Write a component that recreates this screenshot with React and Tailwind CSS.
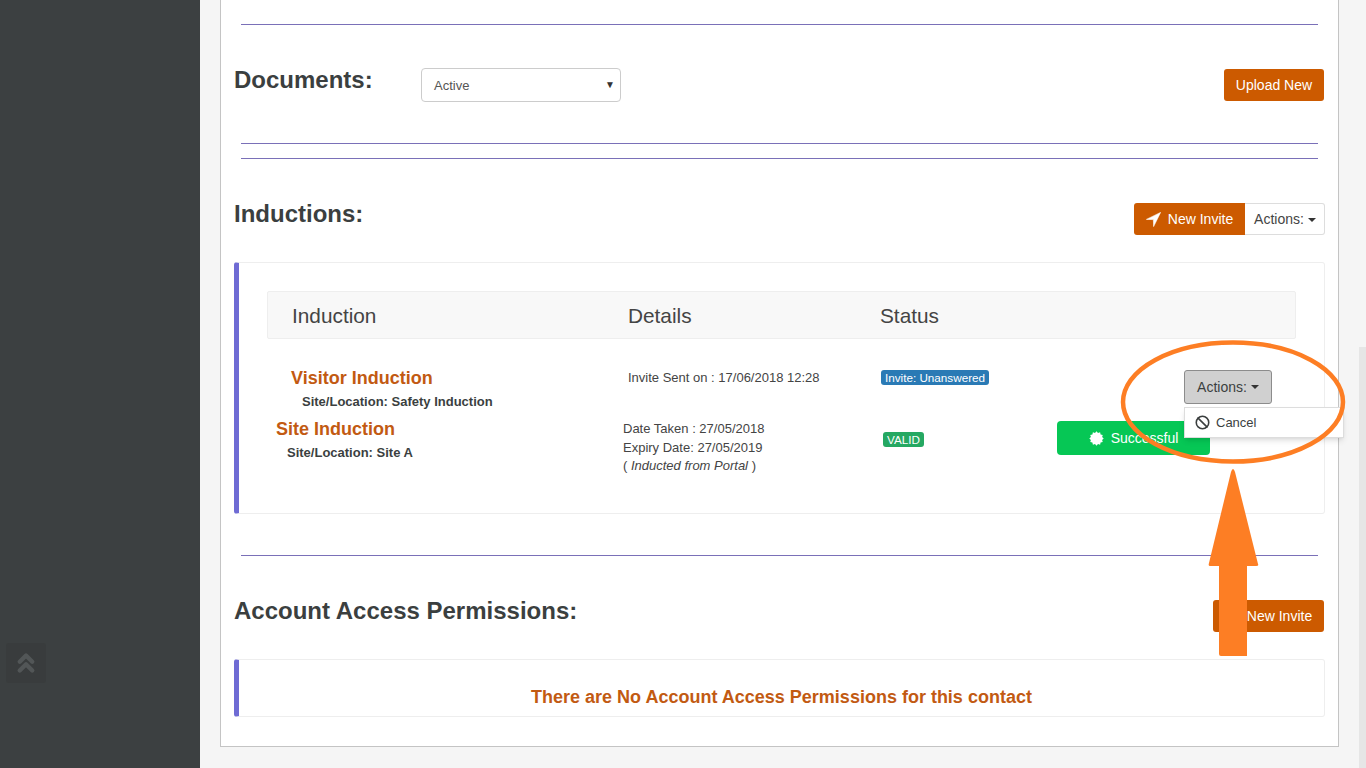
import React from 'react'
import { ChevronsUp, Ban } from 'lucide-react'

function Caret() {
  return <span className="inline-block ml-1 align-middle border-x-[4px] border-x-transparent border-t-[4px] border-t-[#333]" />
}

function Rule({ className = '' }) {
  return <div className={`mx-[7px] h-px bg-[#7a70b8] ${className}`} />
}

function Badge({ color, children }) {
  return (
    <span className={`inline-block rounded-[3px] px-[4px] h-[15px] leading-[15px] text-[11.7px] text-white ${color}`}>
      {children}
    </span>
  )
}

function LocationArrow() {
  return (
    <svg width="15" height="15" viewBox="0 0 15 15" fill="white">
      <path d="M14.6 0.4 L0.4 7.4 L7.4 7.6 L7.6 14.6 Z" stroke="white" strokeWidth="0.6" strokeLinejoin="round" />
    </svg>
  )
}

// jagged round seal
function Certificate() {
  const points = []
  for (let i = 0; i < 24; i++) {
    const r = i % 2 ? 5.8 : 7.2
    const a = (i * Math.PI) / 12
    points.push(`${(7.5 + r * Math.cos(a)).toFixed(2)},${(7.5 + r * Math.sin(a)).toFixed(2)}`)
  }
  return (
    <svg width="15" height="15" viewBox="0 0 15 15" fill="white">
      <polygon points={points.join(' ')} />
    </svg>
  )
}

// ── Orange highlight drawn over the page ─────────────────
function Annotation() {
  return (
    <svg className="absolute left-0 top-0 pointer-events-none" width="1366" height="768" viewBox="0 0 1366 768">
      <ellipse cx="1233" cy="402" rx="110" ry="59.5" fill="none" stroke="#fd7e24" strokeWidth="4.5" />
      <path
        d="M1233 469 Q1234 469 1235 472 L1258 564 Q1259 566 1256 566 L1247 566 L1247 656 L1221 656 Q1219 656 1219 654 L1219 566 L1210 566 Q1208 566 1209 563 L1231 472 Q1232 469 1233 469 Z"
        fill="#fd7e24"
      />
    </svg>
  )
}

export default function App() {
  return (
    <div className="relative flex h-screen overflow-hidden bg-[#f5f5f5] font-['Liberation_Sans',Arial,sans-serif] text-[#3b3f3f]">
      <aside className="relative w-[200px] shrink-0 bg-[#3c4041]">
        <div className="absolute left-[6px] top-[643px] flex h-[40px] w-[40px] items-center justify-center rounded-[3px] bg-[#393c3d]">
          <ChevronsUp size={30} strokeWidth={3.5} className="text-[#525657]" />
        </div>
      </aside>

      <main className="flex-1 pl-[20px] pr-[27px]">
        <div className="h-[747px] border-x border-b border-[#c4c4c4] bg-white pl-[13px] pr-[13px] pt-[24px]">
          <Rule />

          <div className="flex h-[118px] items-start pt-[43px]">
            <h2 className="w-[187px] text-[24px] leading-[26px] font-bold -mt-[1px]">Documents:</h2>
            <div className="relative flex h-[34px] w-[200px] items-center rounded-[4px] border border-[#ccc] pl-[12px] pt-px text-[13px] text-[#555]">
              Active
              <span className="absolute right-[5px] top-[11px] text-[10px] leading-[10px] text-[#333]">▼</span>
            </div>
            <button className="ml-auto mr-px mt-[1px] h-[32px] w-[100px] rounded-[3px] bg-[#cc5a00] text-[14px] text-white">
              Upload New
            </button>
          </div>

          <Rule />
          <Rule className="mt-[14px]" />

          <div className="flex h-[103px] items-start pt-[44px]">
            <h2 className="text-[24px] leading-[26px] font-bold -mt-[2px]">Inductions:</h2>
            <div className="ml-auto flex h-[32px] text-[14px]">
              <button className="flex w-[111px] items-center justify-center gap-[7px] rounded-l-[3px] bg-[#cc5a00] text-white">
                <LocationArrow />
                New Invite
              </button>
              <button className="w-[80px] rounded-r-[3px] border border-l-0 border-[#ddd] bg-white pl-px text-[#444]">
                Actions:<Caret />
              </button>
            </div>
          </div>

          <section className="h-[252px] rounded-[3px] border border-l-[5px] border-[#eee] border-l-[#6f6bd4] pl-[28px] pr-[28px] pt-[28px]">
            <div className="flex h-[48px] items-center rounded-[2px] border border-[#eee] bg-[#f8f8f8] pt-px text-[20.8px] text-[#444]">
              <span className="w-[360px] pl-[24px]">Induction</span>
              <span className="w-[252px]">Details</span>
              <span>Status</span>
            </div>

            <div className="flex h-[80px] pt-[29px]">
              <div className="w-[361px] pl-[24px]">
                <p className="text-[18px] leading-[20px] font-bold text-[#c25a12]">Visitor Induction</p>
                <p className="mt-[6px] pl-[11px] text-[13px] leading-[16px] font-bold">Site/Location: Safety Induction</p>
              </div>
              <p className="mt-[2px] w-[253px] text-[13px] leading-[16px] text-[#444]">Invite Sent on : 17/06/2018 12:28</p>
              <div className="-mt-[3px]"><Badge color="bg-[#2a7ab5]">Invite: Unanswered</Badge></div>
            </div>

            <div className="flex">
              <div className="w-[356px] pl-[9px]">
                <p className="text-[18px] leading-[20px] font-bold text-[#c25a12]">Site Induction</p>
                <p className="mt-[6px] pl-[11px] text-[13px] leading-[16px] font-bold">Site/Location: Site A</p>
              </div>
              <div className="w-[260px] pt-px text-[13px] leading-[18.5px] text-[#444]">
                <p>Date Taken : 27/05/2018</p>
                <p>Expiry Date: 27/05/2019</p>
                <p>( <i>Inducted from Portal</i> )</p>
              </div>
              <div className="w-[174px] pt-[8px]"><Badge color="bg-[#25a862]">VALID</Badge></div>
              <div className="mt-[2px] flex h-[34px] w-[153px] items-center justify-center gap-[7px] rounded-[4px] bg-[#06c755] text-[14px] text-white">
                <Certificate />
                Successful
              </div>
            </div>
          </section>

          <Rule className="mt-[41px]" />

          <div className="flex h-[103px] items-start pt-[44px]">
            <h2 className="text-[24px] leading-[26px] font-bold -mt-[2px]">Account Access Permissions:</h2>
            <button className="ml-auto mr-px h-[32px] w-[111px] rounded-[3px] bg-[#cc5a00] pl-[22px] text-[14px] text-white">
              New Invite
            </button>
          </div>

          <section className="flex h-[58px] items-end justify-center rounded-[3px] border border-l-[5px] border-[#eee] border-l-[#6f6bd4] pb-[9px] text-[18px] leading-[20px] font-bold text-[#c25a12]">
            There are No Account Access Permissions for this contact
          </section>
        </div>
      </main>

      <div className="absolute right-0 top-[347px] h-[421px] w-[7px] bg-[#e6e6e6]" />

      {/* open actions menu */}
      <div className="absolute left-[1184px] top-[370px] flex h-[34px] w-[88px] items-center justify-center rounded-[3px] border border-[#8c8c8c] bg-[#d0d0d0] text-[14px]">
        Actions:<Caret />
      </div>
      <div className="absolute left-[1184px] top-[407px] flex h-[31px] w-[160px] items-center gap-[6px] border border-[#ddd] bg-white pl-[10px] text-[13px] shadow-md">
        <Ban size={15} strokeWidth={2.5} />
        Cancel
      </div>

      <Annotation />
    </div>
  )
}
